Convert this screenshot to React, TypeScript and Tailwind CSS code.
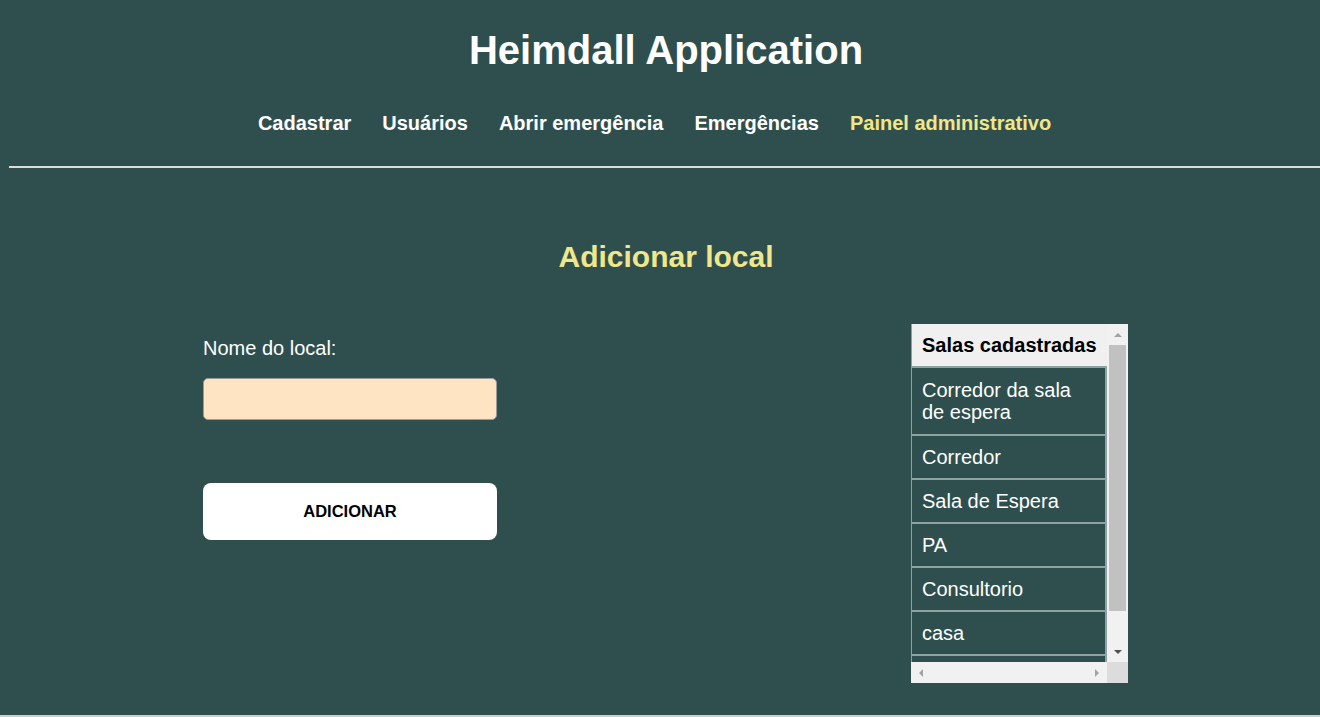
import React from "react";

const links = [
  { label: "Cadastrar", active: false },
  { label: "Usuários", active: false },
  { label: "Abrir emergência", active: false },
  { label: "Emergências", active: false },
  { label: "Painel administrativo", active: true },
];

const salas = ["Corredor", "Sala de Espera", "PA", "Consultorio", "casa"];

const Arrow: React.FC<{ dir: "up" | "down" | "left" | "right"; color: string }> = ({ dir, color }) => {
  const pts = {
    up: "0,4 4,0 8,4",
    down: "0,0 8,0 4,4",
    left: "4,0 4,8 0,4",
    right: "0,0 0,8 4,4",
  }[dir];
  const vertical = dir === "up" || dir === "down";
  return (
    <svg width={vertical ? 8 : 4} height={vertical ? 4 : 8} viewBox={vertical ? "0 0 8 4" : "0 0 4 8"}>
      <polygon points={pts} fill={color} />
    </svg>
  );
};

const SalasTable: React.FC = () => (
  <div className="mt-[2px] w-[217px] h-[359px] flex flex-col">
    <div className="flex flex-1 min-h-0">
      <div className="w-[196px] overflow-hidden border-l border-[#8fa2a2]">
        <div className="h-[44px] bg-[#f0f0f0] border-b-2 border-[#8fa2a2] pl-[10px] flex items-center text-[20px] font-bold text-black leading-[23px]">
          Salas cadastradas
        </div>
        <div className="h-[68px] border-b-2 border-r-2 border-[#8fa2a2] pl-[10px] pr-[10px] flex items-center text-[20px] leading-[22px] text-white">
          Corredor da sala de espera
        </div>
        {salas.map((s) => (
          <div
            key={s}
            className="h-[44px] shrink-0 border-b-2 border-r-2 border-[#8fa2a2] pl-[10px] flex items-center text-[20px] leading-[23px] text-white"
          >
            {s}
          </div>
        ))}
        <div className="h-[44px] border-r-2 border-[#8fa2a2]" />
      </div>
      <div className="w-[21px] bg-[#f1f1f1] flex flex-col items-center">
        <div className="h-[21px] flex items-center justify-center">
          <Arrow dir="up" color="#a3a3a3" />
        </div>
        <div className="w-[17px] h-[266px] bg-[#c1c1c1]" />
        <div className="flex-1" />
        <div className="h-[21px] flex items-center justify-center">
          <Arrow dir="down" color="#505050" />
        </div>
      </div>
    </div>
    <div className="flex h-[21px]">
      <div className="w-[196px] bg-[#f1f1f1] flex items-center justify-between px-[8px]">
        <Arrow dir="left" color="#a3a3a3" />
        <Arrow dir="right" color="#a3a3a3" />
      </div>
      <div className="w-[21px] bg-[#dcdcdc]" />
    </div>
  </div>
);

export default function App() {
  return (
    <div className="min-h-[717px] h-[717px] overflow-hidden bg-[#2f4f4f] font-['Liberation_Sans',Arial,sans-serif] flex flex-col">
      <header>
        <h1 className="pt-[27px] pl-[12px] text-center text-[40px] leading-[46px] font-bold text-white">
          Heimdall Application
        </h1>
        <nav className="mt-[39px] pr-[11px] flex justify-center gap-[31px]">
          {links.map((l) => (
            <a
              key={l.label}
              href="#"
              className={`text-[20px] leading-[23px] font-bold ${l.active ? "text-[#f0e68c]" : "text-white"}`}
            >
              {l.label}
            </a>
          ))}
        </nav>
        <div className="mt-[31px] ml-[9px] h-[2px] bg-[#dcdcdc]" />
      </header>

      <main className="flex-1">
        <h2 className="mt-[72px] pl-[12px] text-center text-[30px] leading-[34px] font-bold text-[#f0e68c]">
          Adicionar local
        </h2>
        <div className="mt-[48px] ml-[203px] w-[925px] flex justify-between items-start">
          <div className="w-[294px] pt-[15px] flex flex-col">
            <label className="text-[20px] leading-[23px] text-white">Nome do local:</label>
            <input
              type="text"
              className="mt-[18px] h-[42px] w-full rounded-[5px] border border-[#9a9a9a] bg-[#ffe4c4] px-3 text-[18px] outline-none"
            />
            <button className="mt-[63px] h-[57px] w-full rounded-[8px] bg-white text-[16.5px] font-bold text-black">
              ADICIONAR
            </button>
          </div>
          <SalasTable />
        </div>
      </main>
      <div className="h-[2px] bg-[#c8d0d0]" />
    </div>
  );
}
